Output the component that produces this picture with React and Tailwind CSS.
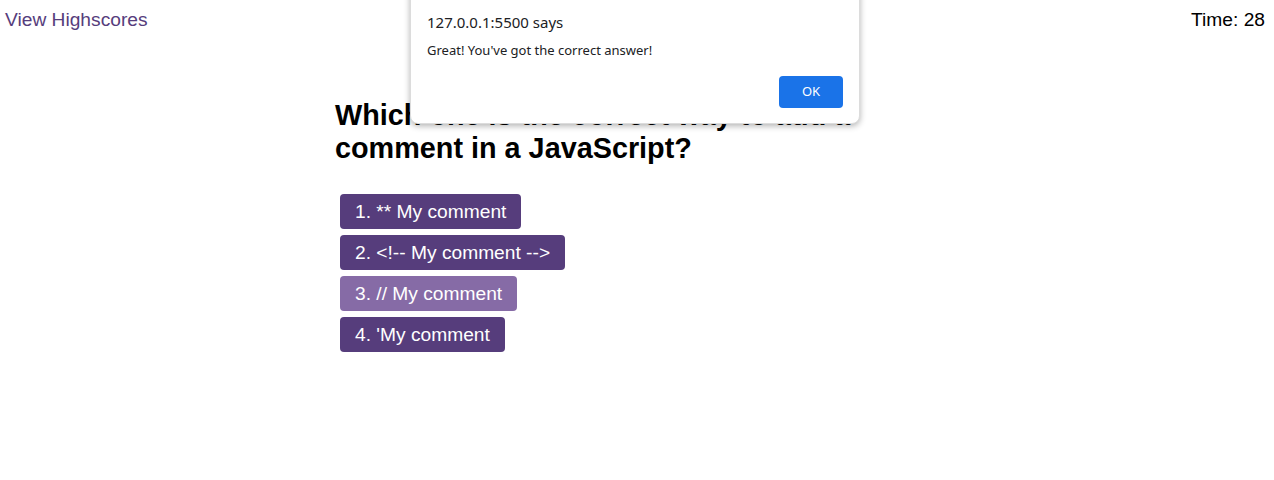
export default function App() {
  const answers = [
    { label: '1. ** My comment', hover: false },
    { label: '2. <!-- My comment -->', hover: false },
    { label: '3. // My comment', hover: true },
    { label: "4. 'My comment", hover: false },
  ]

  return (
    <div className="relative min-h-[480px] bg-white font-['Liberation_Sans',Arial,sans-serif]">
      {/* top bar */}
      <header className="flex justify-between pl-[5px] pr-[9px] pt-[9px] text-[19.2px] leading-[22px]">
        <a className="text-[#563d7c]">View Highscores</a>
        <span className="text-black">Time: 28</span>
      </header>

      {/* quiz */}
      <main className="mx-auto mt-[68px] w-[604px]">
        <h2 className="text-[28.8px] font-bold leading-[33px] text-black">
          Which one is the correct way to add a comment in a JavaScript?
        </h2>
        <div className="mt-[29px] flex flex-col items-start gap-[6px] pl-[5px]">
          {answers.map((a) => (
            <button
              key={a.label}
              className={`flex h-[35px] items-center rounded-[4px] px-[15px] text-[19.2px] leading-[22px] text-white ${
                a.hover ? 'bg-[#866ba6]' : 'bg-[#563d7c]'
              }`}
            >
              {a.label}
            </button>
          ))}
        </div>
      </main>

      {/* browser alert */}
      <div className="absolute left-[410px] top-[-10px] h-[134px] w-[450px] rounded-b-[8px] border border-[#dcdcdc] bg-white font-['Noto_Sans','Open_Sans',sans-serif] shadow-[0_2px_6px_rgba(0,0,0,0.3)]">
        <div className="flex h-full flex-col px-[16px] pt-[21px]">
          <p className="text-[15px] leading-[20px] text-[#202124]">127.0.0.1:5500 says</p>
          <p className="mt-[10px] text-[13px] leading-[17px] text-[#202124]">Great! You've got the correct answer!</p>
          <div className="mt-auto flex justify-end pb-[15px]">
            <button className="flex h-[32px] w-[64px] items-center justify-center rounded-[4px] bg-[#1a73e8] text-[13px] text-white">
              OK
            </button>
          </div>
        </div>
      </div>
    </div>
  )
}
